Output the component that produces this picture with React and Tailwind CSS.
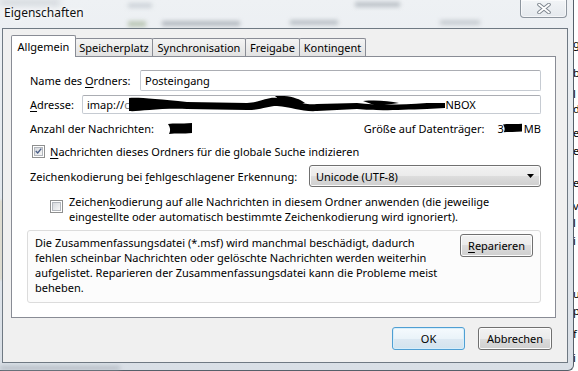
import React from 'react';
import clsx from 'clsx';

const Mn = ({ children }) => <u className="underline underline-offset-[2px] decoration-1">{children}</u>;

const tabs = [
  { label: 'Allgemein', w: 'w-[65px]', active: true },
  { label: 'Speicherplatz', w: 'w-[78px]' },
  { label: 'Synchronisation', w: 'w-[94px]' },
  { label: 'Freigabe', w: 'w-[55px]' },
  { label: 'Kontingent', w: 'w-[67px]' },
];

// letters of the window behind, peeking out on the right edge
const peek = [
  [43, 'g'], [72, 'b'], [93, 'l'], [108, 'd'], [132, 'e'], [150, 'e'], [182, 'e'],
  [205, 'v'], [222, 'l'], [240, 'i'], [293, 'u'], [310, 'p'], [333, 'f'], [357, 'i'],
];

function Tab({ label, w, active }) {
  return (
    <div
      className={clsx(
        'flex items-center justify-center border border-b-0 border-[#898c95] rounded-t-[2px] whitespace-nowrap',
        w,
        active
          ? 'relative z-10 -mb-px h-[22px] bg-white'
          : '-ml-px h-[18px] bg-gradient-to-b from-[#f4f4f4] to-[#e2e2e2]'
      )}
    >
      {label}
    </div>
  );
}

function TextBox({ className, children }) {
  return (
    <div className={clsx('flex items-center border border-[#c6cbd2] border-t-[#abadb3] rounded-[2px] bg-white pl-[4px] whitespace-nowrap overflow-hidden', className)}>
      {children}
    </div>
  );
}

function CheckBox({ checked }) {
  return (
    <div className="w-[13px] h-[13px] shrink-0 border border-[#8e8f8f] bg-white p-px">
      <div className="w-full h-full border border-[#b3b7bd] bg-gradient-to-br from-[#d6d9dd] to-[#f7f7f7] flex items-center justify-center">
        {checked && (
          <svg width="9" height="8" viewBox="0 0 9 8">
            <path d="M1 4 L3.5 6.5 L8 1" fill="none" stroke="#4b5f88" strokeWidth="1.8" />
          </svg>
        )}
      </div>
    </div>
  );
}

function WinButton({ children, focused, className }) {
  return (
    <div
      className={clsx(
        'flex items-center justify-center rounded-[3px] border',
        focused
          ? 'border-[#4f9fd3] shadow-[inset_0_0_0_1px_#d6eefb] bg-[linear-gradient(#f5fafd_0%,#eaf3f9_50%,#dde9f2_50%,#d2e3ee_100%)]'
          : 'border-[#707070] shadow-[inset_0_0_0_1px_#fcfcfc] bg-[linear-gradient(#f2f2f2_0%,#ebebeb_50%,#dddddd_50%,#cfcfcf_100%)]',
        className
      )}
    >
      {children}
    </div>
  );
}

function Scribble({ className }) {
  return (
    <svg className={className} width="320" height="19" viewBox="0 0 320 19">
      <path d="M2 3 C 10 2, 30 4, 60 7 L 120 8 C 135 7, 140 2, 150 3 C 170 4, 175 11, 190 9 L 230 8 C 250 10, 270 10, 300 8 L 318 8 L 318 13 L 300 14 C 270 15, 250 16, 230 14 L 190 16 C 175 17, 165 12, 150 11 C 140 11, 135 15, 120 15 L 60 14 C 30 13, 10 17, 2 16 Z" fill="#000" />
      <path d="M148 1 C 160 0, 172 3, 178 8 L 158 10 Z" fill="#000" />
      <path d="M236 6 C 250 5, 262 6, 272 8 L 250 11 Z" fill="#000" />
    </svg>
  );
}

function Blob({ className, w = 24, h = 11 }) {
  return (
    <svg className={className} width={w} height={h} viewBox="0 0 24 11">
      <path d="M0 1 C 6 0, 12 1, 24 0 L 24 10 C 15 11, 8 10, 1 11 C 3 7, 2 4, 0 1 Z" fill="#000" />
    </svg>
  );
}

export default function App() {
  let prev = 0;
  return (
    <div className="w-[578px] h-[371px] overflow-hidden flex bg-white font-['Noto_Sans',sans-serif] text-[11px] leading-[15px] text-black">
      <div className="relative w-[574px] h-full shrink-0 flex flex-col bg-gradient-to-b from-[#eef1f4] via-[#e3e8ed] to-[#d9dfe6] border-r border-b border-[#56606a] rounded-br-[6px]">
        {/* blurred content seen through the glass */}
        <div className="absolute left-[0px] top-[0px] w-[60px] h-[5px] bg-[#b8bec5] blur-[3px] opacity-60" />
        <div className="absolute left-[128px] top-[3px] w-[24px] h-[5px] bg-[#b9c0c8] blur-[2px] opacity-60" />
        <div className="absolute left-[128px] top-[21px] w-[18px] h-[6px] bg-[#a9b8a0] blur-[2px] opacity-70" />
        <div className="absolute left-[162px] top-[21px] w-[78px] h-[5px] bg-[#8e969f] blur-[2px] opacity-60" />
        <div className="absolute left-[355px] top-[2px] w-[45px] h-[5px] bg-[#9aa2aa] blur-[2px] opacity-60" />
        <div className="absolute left-[290px] top-[20px] w-[48px] h-[5px] bg-[#9aa2aa] blur-[2px] opacity-60" />
        <div className="absolute left-[440px] top-[20px] w-[40px] h-[5px] bg-[#a2a9b1] blur-[2px] opacity-50" />
        <div className="absolute left-[0px] bottom-[0px] w-[120px] h-[4px] bg-[#9fa7b0] blur-[2px] opacity-60" />
        <div className="absolute left-[0px] top-[200px] w-[2px] h-[80px] bg-[#d8c9a0] blur-[1px] opacity-60" />

        {/* title bar */}
        <div className="relative h-[28px] flex items-start">
          <span className="ml-[4px] mt-[5px] text-[12px] leading-[16px] text-[#111] [text-shadow:0_0_6px_#ffffff,0_0_3px_#ffffff]">
            Eigenschaften
          </span>
          <div className="ml-auto mr-[6px] w-[47px] h-[18px] rounded-b-[4px] border border-t-0 border-[#8d959e] bg-gradient-to-b from-[#f4f6f8]/60 to-[#dfe4e9]/60 shadow-[inset_0_0_0_1px_rgba(255,255,255,0.6)] flex items-center justify-center">
            <svg width="14" height="11" viewBox="0 0 14 11">
              <path d="M2 1.5 L12 9.5 M12 1.5 L2 9.5" stroke="#7b838c" strokeWidth="3.6" strokeLinecap="round" />
              <path d="M2 1.5 L12 9.5 M12 1.5 L2 9.5" stroke="#ffffff" strokeWidth="1.8" strokeLinecap="round" />
            </svg>
          </div>
        </div>

        {/* client area */}
        <div className="relative ml-[2px] w-[566px] h-[335px] border border-[#6f7983] bg-[#f0f0f0] flex flex-col">
          <div className="ml-[8px] mt-[6px] h-[21px] flex items-end">
            {tabs.map((t) => (
              <Tab key={t.label} {...t} />
            ))}
          </div>

          <div className="ml-[8px] w-[545px] h-[262px] border border-[#898c95] bg-white pl-[18px] pr-[14px] pt-[13px] flex flex-col">
            <div className="h-[21px] flex items-center">
              <span className="w-[110px] shrink-0">Name des <Mn>O</Mn>rdners:</span>
              <TextBox className="flex-1 h-[21px]">Posteingang</TextBox>
            </div>

            <div className="mt-[4px] h-[19px] flex items-center">
              <span className="w-[52px] shrink-0"><Mn>A</Mn>dresse:</span>
              <TextBox className="flex-1 h-[19px]">
                <span>imap://</span>
                <span className="text-[#777]">c</span>
                <Scribble className="shrink-0 -ml-[2px]" />
                <span className="-ml-[2px]">NBOX</span>
              </TextBox>
            </div>

            <div className="mt-[6px] h-[16px] flex items-center">
              <span>Anzahl der Nachrichten:</span>
              <Blob className="ml-[14px]" />
              <span className="ml-auto">Größe auf Datenträger:</span>
              <span className="ml-[13px]">3</span>
              <Blob className="-ml-[1px]" w={19} h={10} />
              <span className="ml-[2px]">MB</span>
            </div>

            <div className="mt-[7px] h-[16px] flex items-center">
              <div className="ml-[2px]"><CheckBox checked /></div>
              <span className="ml-[5px]"><Mn>N</Mn>achrichten dieses Ordners für die globale Suche indizieren</span>
            </div>

            <div className="mt-[6px] h-[22px] flex items-center">
              <span>Zeichenkodierung bei <Mn>f</Mn>ehlgeschlagener Erkennung:</span>
              <div className="ml-auto w-[232px] h-[22px] rounded-[3px] border border-[#707070] shadow-[inset_0_0_0_1px_#fbfbfb] bg-[linear-gradient(#f2f2f2_0%,#ebebeb_50%,#dddddd_50%,#cfcfcf_100%)] flex items-center pl-[6px] pr-[6px]">
                <span>Unicode (UTF-8)</span>
                <svg className="ml-auto" width="7" height="4" viewBox="0 0 7 4">
                  <path d="M0 0 H7 L3.5 4 Z" fill="#000" />
                </svg>
              </div>
            </div>

            <div className="mt-[7px] pl-[20px] flex items-start">
              <div className="mt-[6px]"><CheckBox /></div>
              <span className="ml-[6px] whitespace-nowrap">
                Zeichen<Mn>k</Mn>odierung auf alle Nachrichten in diesem Ordner anwenden (die jeweilige
                <br />
                eingestellte oder automatisch bestimmte Zeichenkodierung wird ignoriert).
              </span>
            </div>

            <div className="mt-[6px] -ml-[3px] h-[73px] rounded-[3px] border border-[#dcdcdc] bg-[#fcfcfc] pl-[7px] pr-[7px] pt-[4px] flex items-start">
              <span className="whitespace-nowrap">
                Die Zusammenfassungsdatei (*.msf) wird manchmal beschädigt, dadurch
                <br />
                fehlen scheinbar Nachrichten oder gelöschte Nachrichten werden weiterhin
                <br />
                aufgelistet. Reparieren der Zusammenfassungsdatei kann die Probleme meist
                <br />
                beheben.
              </span>
              <WinButton className="ml-auto -mt-px w-[73px] h-[23px]"><span><Mn>R</Mn>eparieren</span></WinButton>
            </div>
          </div>

          <div className="mt-[9px] pr-[15px] flex justify-end gap-[13px]">
            <WinButton focused className="w-[73px] h-[23px]">OK</WinButton>
            <WinButton className="w-[74px] h-[23px]">Abbrechen</WinButton>
          </div>
        </div>
      </div>

      {/* window behind */}
      <div className="flex-1 overflow-hidden flex flex-col bg-white">
        {peek.map(([y, ch]) => {
          const gap = y - 7 - prev;
          prev = y + 8;
          return (
            <div key={y} className="flex flex-col">
              <div style={{ height: gap }} />
              <span className="-ml-[1px] h-[15px] text-[11px] leading-[15px]">{ch}</span>
            </div>
          );
        })}
      </div>
    </div>
  );
}
